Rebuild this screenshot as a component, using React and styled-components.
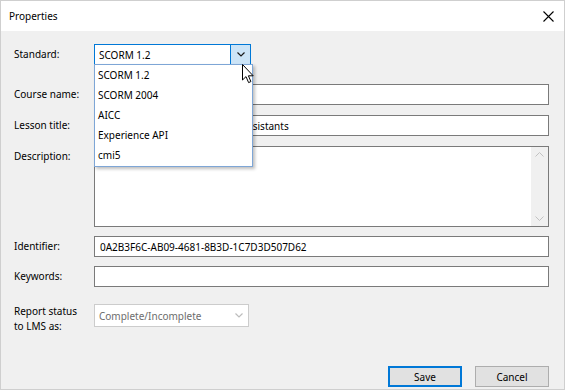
import React from "react";
import styled, { createGlobalStyle } from "styled-components";

const GlobalStyle = createGlobalStyle`
  html, body {
    margin: 0;
    padding: 0;
    background: #ffffff;
  }
  body {
    font-family: "Noto Sans", "Liberation Sans", sans-serif;
    font-size: 10px;
    color: #000;
  }
`;

const Window = styled.div`
  position: relative;
  width: 565px;
  height: 390px;
  box-sizing: border-box;
  border: 1px solid #cfcfcf;
  display: flex;
  flex-direction: column;
  background: #f0f0f0;
  overflow: hidden;
`;

const TitleBar = styled.div`
  height: 30px;
  flex: none;
  background: #ffffff;
  display: flex;
  align-items: center;
  justify-content: space-between;
  padding: 0 10px 0 8px;
`;

const Title = styled.span`
  font-size: 10px;
  line-height: 16px;
`;

const CloseButton = styled.div`
  width: 12px;
  height: 12px;
  display: flex;
  align-items: center;
  justify-content: center;
`;

const Body = styled.div`
  flex: 1;
  display: flex;
  flex-direction: column;
  padding: 13px 15px 0 13px;
`;

const Row = styled.div`
  display: grid;
  grid-template-columns: 80px 1fr;
  align-items: ${(p) => (p.$top ? "start" : "center")};
  margin-top: ${(p) => p.$mt || 0}px;
  position: relative;
`;

const Label = styled.label`
  font-size: 10px;
  line-height: 15px;
  padding-top: ${(p) => p.$pt || 0}px;
`;

const TextBox = styled.div`
  height: 21px;
  box-sizing: border-box;
  border: 1px solid #7a7a7a;
  background: #ffffff;
  padding: 0 5px;
  display: flex;
  align-items: center;
  white-space: nowrap;
  overflow: hidden;
`;

const TextArea = styled.div`
  height: 81px;
  box-sizing: border-box;
  border: 1px solid #7a7a7a;
  background: #ffffff;
  display: flex;
  justify-content: flex-end;
`;

const ScrollBar = styled.div`
  width: 17px;
  background: #f0f0f0;
  display: flex;
  flex-direction: column;
  justify-content: space-between;
  align-items: center;
  padding: 5px 0;
`;

const Combo = styled.div`
  width: ${(p) => p.$w}px;
  height: ${(p) => p.$h}px;
  box-sizing: border-box;
  border: 1px solid ${(p) => (p.$active ? "#0078d7" : "#cccccc")};
  background: #ffffff;
  display: flex;
  align-items: stretch;
  color: ${(p) => (p.$disabled ? "#6d6d6d" : "#000")};
`;

const ComboText = styled.div`
  flex: 1;
  display: flex;
  align-items: center;
  padding-left: 4px;
`;

const ComboArrow = styled.div`
  width: 19px;
  display: flex;
  align-items: center;
  justify-content: center;
  background: ${(p) => (p.$active ? "#cce4f7" : "transparent")};
  border-left: 1px solid ${(p) => (p.$active ? "#0078d7" : "transparent")};
`;

const DropList = styled.ul`
  position: absolute;
  left: 80px;
  top: 20px;
  width: 157px;
  margin: 0;
  padding: 0 0 1px;
  list-style: none;
  background: #ffffff;
  border: 1px solid #7ea6d6;
  box-shadow: 2px 2px 3px rgba(0, 0, 0, 0.25);
  z-index: 2;
`;

const DropItem = styled.li`
  height: 20px;
  line-height: 20px;
  padding-left: 3px;
`;

const Footer = styled.div`
  display: flex;
  justify-content: flex-end;
  gap: 13px;
  margin-top: 32px;
`;

const Button = styled.button`
  width: 74px;
  height: 21px;
  box-sizing: border-box;
  font-family: inherit;
  font-size: 10px;
  color: #000;
  background: #e1e1e1;
  border: ${(p) => (p.$default ? "2px solid #0078d7" : "1px solid #adadad")};
  padding: 0;
`;

const Cursor = styled.svg`
  position: absolute;
  left: 241px;
  top: 63px;
  z-index: 5;
`;

const Chevron = ({ color = "#000" }) => (
  <svg width="8" height="5" viewBox="0 0 8 5">
    <path d="M0.5 0.5 L4 4 L7.5 0.5" fill="none" stroke={color} strokeWidth="1.2" />
  </svg>
);

const ChevronUp = ({ color }) => (
  <svg width="9" height="5" viewBox="0 0 9 5">
    <path d="M0.5 4.5 L4.5 0.5 L8.5 4.5" fill="none" stroke={color} strokeWidth="1" />
  </svg>
);

const standards = ["SCORM 1.2", "SCORM 2004", "AICC", "Experience API", "cmi5"];

export default function App() {
  return (
    <>
      <GlobalStyle />
      <Window>
        <TitleBar>
          <Title>Properties</Title>
          <CloseButton>
            <svg width="11" height="11" viewBox="0 0 11 11">
              <path d="M0.5 0.5 L10.5 10.5 M10.5 0.5 L0.5 10.5" stroke="#000" strokeWidth="1.1" />
            </svg>
          </CloseButton>
        </TitleBar>
        <Body>
          <Row>
            <Label>Standard:</Label>
            <Combo $w={157} $h={21} $active>
              <ComboText>SCORM 1.2</ComboText>
              <ComboArrow $active>
                <Chevron color="#1a1a1a" />
              </ComboArrow>
            </Combo>
            <DropList>
              {standards.map((s) => (
                <DropItem key={s}>{s}</DropItem>
              ))}
            </DropList>
          </Row>
          <Row $mt={19}>
            <Label>Course name:</Label>
            <TextBox />
          </Row>
          <Row $mt={10}>
            <Label>Lesson title:</Label>
            <TextBox>Getting Started with Software Assistants</TextBox>
          </Row>
          <Row $mt={10} $top>
            <Label $pt={3}>Description:</Label>
            <TextArea>
              <ScrollBar>
                <ChevronUp color="#c2c2c2" />
                <svg width="9" height="5" viewBox="0 0 9 5">
                  <path d="M0.5 0.5 L4.5 4.5 L8.5 0.5" fill="none" stroke="#c2c2c2" strokeWidth="1" />
                </svg>
              </ScrollBar>
            </TextArea>
          </Row>
          <Row $mt={9}>
            <Label>Identifier:</Label>
            <TextBox>0A2B3F6C-AB09-4681-8B3D-1C7D3D507D62</TextBox>
          </Row>
          <Row $mt={9}>
            <Label>Keywords:</Label>
            <TextBox />
          </Row>
          <Row $mt={17} $top>
            <Label>
              Report status
              <br />
              to LMS as:
            </Label>
            <Combo $w={155} $h={23} $disabled>
              <ComboText>Complete/Incomplete</ComboText>
              <ComboArrow>
                <Chevron color="#bdbdbd" />
              </ComboArrow>
            </Combo>
          </Row>
          <Footer>
            <Button $default>Save</Button>
            <Button>Cancel</Button>
          </Footer>
        </Body>
        <Cursor width="13" height="20" viewBox="0 0 13 20">
          <path
            d="M0.5 0.5 L0.5 16 L4 12.6 L6.6 18.6 L8.9 17.6 L6.4 11.8 L11.2 11.8 Z"
            fill="#ffffff"
            stroke="#000000"
            strokeWidth="1"
            strokeLinejoin="miter"
          />
        </Cursor>
      </Window>
    </>
  );
}
